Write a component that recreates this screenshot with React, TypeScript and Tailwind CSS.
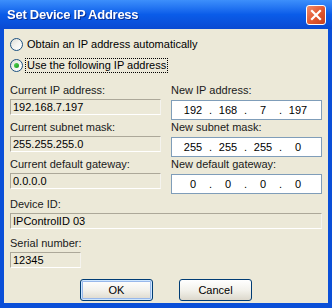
const font = { fontFamily: '"Liberation Sans", Arial, sans-serif' };

function Radio({ checked, label, focus }: { checked?: boolean; label: string; focus?: boolean }) {
  return (
    <div className="flex items-center h-[15px]">
      <span className="w-[13px] h-[13px] rounded-full border border-[#1c5180] bg-gradient-to-br from-[#dcdcd6] via-[#f4f4f0] to-white flex items-center justify-center shrink-0">
        {checked && <span className="w-[5px] h-[5px] rounded-full bg-gradient-to-br from-[#55d755] to-[#15991a]" />}
      </span>
      <span
        className={`ml-[3px] px-[1px] leading-[13px] text-[11px] text-black ${
          focus ? 'outline outline-1 outline-dotted outline-black' : ''
        }`}
      >
        {label}
      </span>
    </div>
  );
}

function ReadBox({ value, className = '' }: { value: string; className?: string }) {
  return (
    <div
      className={`h-[16px] border-t border-l border-t-[#aca899] border-l-[#aca899] border-b border-r border-b-white border-r-[#f4f3ee] px-[2px] text-[11px] leading-[14px] text-black ${className}`}
    >
      {value}
    </div>
  );
}

function IpBox({ parts }: { parts: string[] }) {
  return (
    <div className="h-[20px] border border-[#7f9db9] bg-white flex items-center pl-[7px] text-[11px] text-black">
      {parts.map((p, i) => (
        <div key={i} className="flex items-center">
          <span className="w-[28px] text-center">{p}</span>
          {i < 3 && <span className="w-[7px] text-center">.</span>}
        </div>
      ))}
    </div>
  );
}

function Field({ label, children, gap }: { label: string; children: React.ReactNode; gap: string }) {
  return (
    <div className="flex flex-col">
      <div className={`text-[11px] leading-[13px] text-[#1a1a1a] ${gap}`}>{label}</div>
      {children}
    </div>
  );
}

const rows = [
  { cur: 'Current IP address:', curVal: '192.168.7.197', nw: 'New IP address:', nwVal: ['192', '168', '7', '197'] },
  { cur: 'Current subnet mask:', curVal: '255.255.255.0', nw: 'New subnet mask:', nwVal: ['255', '255', '255', '0'] },
  { cur: 'Current default gateway:', curVal: '0.0.0.0', nw: 'New default gateway:', nwVal: ['0', '0', '0', '0'] },
];

function Button({ label, isDefault }: { label: string; isDefault?: boolean }) {
  return (
    <button
      className={`w-[73px] h-[22px] rounded-[3px] border border-[#003c74] bg-gradient-to-b from-white via-[#f3f2ec] to-[#dcd8cc] text-[11px] text-black flex items-center justify-center ${
        isDefault ? 'shadow-[inset_0_0_0_1px_#cee7ff,inset_0_0_0_2px_#98b8ea]' : ''
      }`}
    >
      {label}
    </button>
  );
}

export default function App() {
  return (
    <div className="w-[332px] h-[308px] flex flex-col bg-[#0a4fd8]" style={font}>
      {/* Title bar */}
      <div className="h-[29px] shrink-0 flex items-center justify-between pl-[7px] pr-[6px] bg-gradient-to-b from-[#3d8ffb] via-[#0a5ce9] to-[#0a4ad2]">
        <span className="text-white font-bold text-[13px] tracking-[-0.25px] drop-shadow-[1px_1px_0_#0a2f94]">
          Set Device IP Address
        </span>
        <div className="w-[20px] h-[20px] rounded-[3px] border border-white bg-gradient-to-br from-[#f08a6b] via-[#e35a32] to-[#c9401c] flex items-center justify-center">
          <svg width="12" height="12" viewBox="0 0 12 12">
            <path d="M2 2 L10 10 M10 2 L2 10" stroke="white" strokeWidth="2.2" strokeLinecap="square" />
          </svg>
        </div>
      </div>

      {/* Body */}
      <div className="mx-[4px] mb-[5px] flex-1 bg-[#ece9d8] px-[6px] pt-[8px] flex flex-col">
        <div className="flex flex-col gap-[6px]">
          <Radio label="Obtain an IP address automatically" />
          <Radio checked focus label="Use the following IP address" />
        </div>

        <div className="mt-[11px] grid grid-cols-2 gap-x-[10px] gap-y-[1px]">
          {rows.map((r) => (
            <div key={r.cur} className="contents">
              <Field label={r.cur} gap="mb-[2px]">
                <ReadBox value={r.curVal} />
              </Field>
              <Field label={r.nw} gap="mb-[3px]">
                <IpBox parts={r.nwVal} />
              </Field>
            </div>
          ))}
        </div>

        <div className="mt-[4px]">
          <Field label="Device ID:" gap="mb-[2px]">
            <ReadBox value="IPControlID 03" />
          </Field>
        </div>
        <div className="mt-[8px]">
          <Field label="Serial number:" gap="mb-[2px]">
            <ReadBox value="12345" className="w-[71px]" />
          </Field>
        </div>

        <div className="mt-[11px] flex justify-center gap-[26px]">
          <Button label="OK" isDefault />
          <Button label="Cancel" />
        </div>
      </div>
    </div>
  );
}
